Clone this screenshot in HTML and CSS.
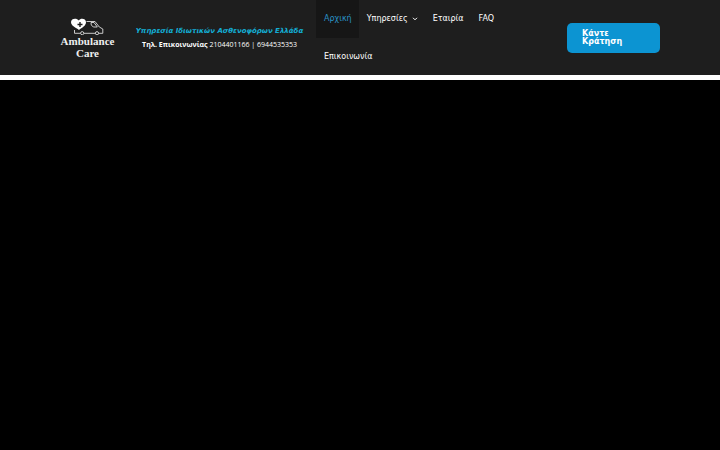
FILE: index.html
```html
<!DOCTYPE html>
<html lang="el">
<head>
<meta charset="utf-8">
<meta name="viewport" content="width=device-width, initial-scale=1">
<title>Ambulance Care</title>
<link rel="stylesheet" href="styles.css">
</head>
<body>
<header class="header">
  <div class="inner">
    <a class="logo" href="#">
      <svg class="mark" viewBox="0 0 34 18" aria-hidden="true">
        <path fill="#fff" d="M8 13C5 10.500 0 9 0 5 0 1.500 5.500 .5 7.800 3.500 9.500 .5 15 1.500 15 5 15 9 11 10.500 8 13Z"/>
        <path stroke="#1e1e1e" stroke-width="1.400" d="M9 5v5M6.500 7.500h5"/>
        <g fill="none" stroke="#ddd" stroke-width=".9" stroke-linejoin="round">
          <path d="M3.500 13v3.300h6M13 16.300h11.300M15.500 4.500h8.500l4.300 5.500 3.500 2v4.300h-4"/>
          <path d="M20 5.500h3l3.300 4.500h-4l-2-2Z"/>
          <circle cx="11.200" cy="16.200" r="1.600"/>
          <circle cx="26" cy="16.200" r="1.600"/>
        </g>
      </svg>
      <span>Ambulance</span>
      <span>Care</span>
    </a>
    <div class="contact">
      <em class="tagline">Υπηρεσία Ιδιωτικών Ασθενοφόρων Ελλάδα</em>
      <span class="phone"><b>Τηλ. Επικοινωνίας</b> 2104401166 | 6944535353</span>
    </div>
    <nav class="nav">
      <a class="active" href="#">Αρχική</a>
      <a href="#">Υπηρεσίες
        <svg class="chevron" viewBox="0 0 6 4" aria-hidden="true"><path fill="none" stroke="currentColor" d="M1 .8l2 2 2-2"/></svg>
      </a>
      <a href="#">Εταιρία</a>
      <a href="#">FAQ</a>
      <a href="#">Επικοινωνία</a>
    </nav>
    <a class="book" href="#">Κάντε Κράτηση</a>
  </div>
</header>
<main class="hero"></main>
</body>
</html>
```
FILE: styles.css
```css
* { box-sizing: border-box; }
body {
  margin: 0;
  min-height: 100vh;
  display: flex;
  flex-direction: column;
  background: #000;
  color: #fff;
  font-family: "DejaVu Sans", sans-serif;
  font-size: 8px;
}
a { color: inherit; text-decoration: none; }
.header { background: #1e1e1e; border-bottom: 5px solid #fff; }
.inner {
  display: flex;
  align-items: center;
  margin: 0 60px;
}
.logo {
  flex: none;
  width: 55px;
  display: flex;
  flex-direction: column;
  align-items: center;
  padding-top: 1px;
  color: #eee;
  font: bold 11px/12px "Liberation Serif", serif;
}
.mark { width: 34px; height: 18px; }
.contact {
  flex: none;
  width: 201px;
  display: flex;
  flex-direction: column;
  align-items: center;
  padding-left: 8px;
  font-size: 7px;
  line-height: 14px;
  white-space: nowrap;
}
.tagline { color: #13aed5; font-weight: bold; }
.phone { font-family: "Open Sans", sans-serif; }
.nav {
  flex: 1;
  display: flex;
  flex-wrap: wrap;
  padding-right: 50px;
}
.nav a {
  display: flex;
  align-items: center;
  gap: 4px;
  padding: 0 7px 0 8px;
  line-height: 38px;
}
.nav .active { background: #161616; color: #2a91c6; }
.nav a:last-child { line-height: 37px; }
.chevron { width: 6px; height: 4px; }
.book {
  flex: none;
  width: 93px;
  padding: 7px 15px;
  border-radius: 5px;
  background: #0c94d2;
  font-weight: bold;
  line-height: 8px;
}
.hero { flex: 1; background: #000; }
```
